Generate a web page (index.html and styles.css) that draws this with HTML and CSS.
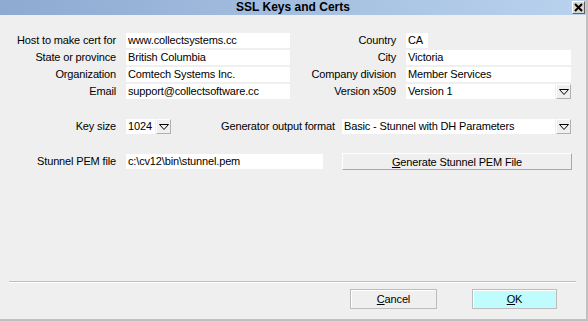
FILE: index.html
```html
<!DOCTYPE html>
<html>
  <head>
    <title>SSL Keys and Certs</title>
    <link rel="stylesheet" href="styles.css">
  </head>
  <body>
    <div class="window">
      <div class="titlebar">
        <span></span>
        <span class="title">SSL Keys and Certs</span>
        <span class="close">
          <svg width="9" height="9" viewBox="0 0 9 9">
            <path d="M1 1 L8 8 M8 1 L1 8" stroke="#000" stroke-width="2"/>
          </svg>
        </span>
      </div>

      <div class="fields">
        <label>Host to make cert for</label>
        <input type="text" value="www.collectsystems.cc">
        <label>Country</label>
        <input type="text" class="short" value="CA">

        <label>State or province</label>
        <input type="text" value="British Columbia">
        <label>City</label>
        <input type="text" value="Victoria">

        <label>Organization</label>
        <input type="text" value="Comtech Systems Inc.">
        <label>Company division</label>
        <input type="text" value="Member Services">

        <label>Email</label>
        <input type="text" value="support@collectsoftware.cc">
        <label>Version x509</label>
        <div class="combo">
          <span class="combo-value">Version 1</span>
          <span class="drop">
            <svg width="10" height="6" viewBox="0 0 10 6"><path d="M0.5 0.5 H9.5 L5 5.5 Z" fill="none" stroke="#000"/></svg>
          </span>
        </div>
      </div>

      <div class="row key-row">
        <label class="lbl">Key size</label>
        <div class="combo keysize">
          <span class="combo-value">1024</span>
          <span class="drop">
            <svg width="10" height="6" viewBox="0 0 10 6"><path d="M0.5 0.5 H9.5 L5 5.5 Z" fill="none" stroke="#000"/></svg>
          </span>
        </div>
        <label class="gen-lbl">Generator output format</label>
        <div class="combo generator">
          <span class="combo-value">Basic - Stunnel with DH Parameters</span>
          <span class="drop">
            <svg width="10" height="6" viewBox="0 0 10 6"><path d="M0.5 0.5 H9.5 L5 5.5 Z" fill="none" stroke="#000"/></svg>
          </span>
        </div>
      </div>

      <div class="row pem-row">
        <label class="lbl">Stunnel PEM file</label>
        <input type="text" class="pem" value="c:\cv12\bin\stunnel.pem">
        <button class="btn generate"><u>G</u>enerate Stunnel PEM File</button>
      </div>

      <div class="footer">
        <div class="separator"></div>
        <div class="actions">
          <button class="btn cancel"><u>C</u>ancel</button>
          <button class="btn ok"><u>O</u>K</button>
        </div>
      </div>
    </div>
  </body>
</html>
```

FILE: styles.css
```css
body {
  margin: 0;
  font-family: "Liberation Sans", Arial, sans-serif;
  font-size: 11px;
  letter-spacing: -0.15px;
  color: #000;
  background-color: #efefef;
}
.window {
  width: 588px;
  height: 321px;
  box-sizing: border-box;
  border-right: 2px solid #c0c0c0;
  border-bottom: 2px solid #c0c0c0;
  background-color: #efefef;
  display: flex;
  flex-direction: column;
}
.titlebar {
  height: 15px;
  display: grid;
  grid-template-columns: 1fr auto 1fr;
  align-items: start;
  background: linear-gradient(to right, #8eaad1, #b9d2ee);
}
.title {
  font-size: 12px;
  font-weight: bold;
  letter-spacing: 0;
  line-height: 15px;
}
.close {
  justify-self: end;
  margin: 1px 1px 0 0;
  width: 13px;
  height: 13px;
  box-sizing: border-box;
  background-color: #d8d6d0;
  border-top: 1px solid #fff;
  border-left: 1px solid #fff;
  border-right: 1px solid #606060;
  border-bottom: 1px solid #606060;
  display: flex;
  align-items: center;
  justify-content: center;
}
input {
  font-family: inherit;
  font-size: 11px;
  letter-spacing: inherit;
  color: #000;
  height: 15px;
  line-height: 15px;
  box-sizing: border-box;
  border: none;
  padding: 0 2px;
  margin: 0;
  background-color: #fff;
  outline: none;
}
label {
  line-height: 15px;
  text-align: right;
  white-space: nowrap;
}
.fields {
  margin-top: 18px;
  display: grid;
  grid-template-columns: 116px 164px 96px 165px;
  column-gap: 10px;
  row-gap: 2px;
}
.short {
  width: 22px;
}
.combo {
  display: flex;
  height: 15px;
}
.combo-value {
  flex: 1;
  background-color: #fff;
  padding: 0 2px;
  line-height: 15px;
  white-space: nowrap;
}
.drop {
  width: 15px;
  height: 15px;
  margin-left: 1px;
  box-sizing: border-box;
  border-top: 1px solid #fff;
  border-left: 1px solid #fff;
  border-right: 1px solid #b0b0b0;
  border-bottom: 1px solid #b0b0b0;
  display: flex;
  align-items: center;
  justify-content: center;
}
.row {
  display: flex;
  align-items: center;
}
.lbl {
  width: 116px;
  margin-right: 10px;
}
.key-row {
  margin-top: 20px;
  height: 15px;
}
.keysize {
  width: 45px;
}
.gen-lbl {
  width: 164px;
  margin-right: 7px;
}
.generator {
  width: 229px;
}
.pem-row {
  margin-top: 19px;
  height: 17px;
}
.pem {
  width: 197px;
}
.btn {
  font-family: inherit;
  font-size: 11px;
  letter-spacing: inherit;
  color: #000;
  box-sizing: border-box;
  background-color: #efefef;
  border-top: 1px solid #fff;
  border-left: 1px solid #fff;
  border-right: 1px solid #a8a8a8;
  border-bottom: 1px solid #a8a8a8;
  padding: 0;
  margin: 0;
}
.generate {
  width: 230px;
  height: 17px;
  margin-left: 19px;
}
.footer {
  margin-top: auto;
  padding-bottom: 10px;
}
.separator {
  margin: 0 10px 0 9px;
  border-top: 1px solid #bdbdbd;
  border-bottom: 1px solid #fff;
}
.actions {
  display: flex;
  justify-content: flex-end;
  gap: 35px;
  margin-top: 6px;
  padding-right: 29px;
}
.cancel,
.ok {
  height: 20px;
  border: 1px solid #bcbcbc;
  box-shadow: inset 1px 1px 0 #fff;
}
.cancel {
  width: 87px;
}
.ok {
  width: 85px;
  background-color: #c0fbfd;
}
```
